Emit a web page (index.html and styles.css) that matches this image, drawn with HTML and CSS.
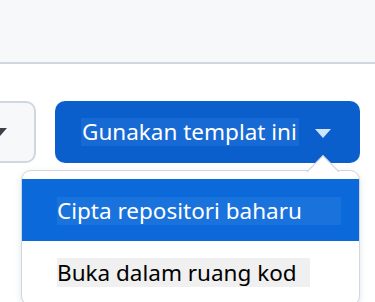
FILE: index.html
```html
<!DOCTYPE html>
<html lang="ms">
<head>
  <meta charset="UTF-8" />
  <meta name="viewport" content="width=device-width, initial-scale=1.0"/>
  <title>Templat</title>
  <link rel="stylesheet" href="styles.css">
</head>
<body>

  <div class="topbar"></div>

  <div class="actions">
    <button class="btn-secondary">
      <span class="caret caret-dark"></span>
    </button>
    <button class="btn-primary">
      <span class="label">Gunakan templat ini</span>
      <span class="caret caret-light"></span>
    </button>
  </div>

  <div class="menu">
    <svg class="menu-arrow" width="34" height="18" viewBox="0 0 34 18">
      <path d="M1 18 L17 1.5 L33 18" fill="#fff" stroke="#d0d7de" stroke-width="1.2"/>
    </svg>
    <div class="menu-item selected"><span class="label">Cipta repositori baharu</span></div>
    <div class="menu-item"><span class="label">Buka dalam ruang kod</span></div>
  </div>

</body>
</html>
```

FILE: styles.css
```css
body {
  margin: 0;
  background: #fff;
  font-family: "Noto Sans", "Open Sans", sans-serif;
  overflow: hidden;
}

.topbar {
  height: 62px;
  background: #f6f8fa;
  border-bottom: 2px solid #d0d7de;
}

.actions {
  display: flex;
  gap: 19px;
  margin-top: 37px;
}

button {
  font-family: inherit;
  cursor: pointer;
}

.btn-secondary {
  width: 90px;
  height: 62px;
  margin-left: -54px;
  background: #f6f8fa;
  border: 2px solid #d0d7de;
  border-radius: 10px;
  display: flex;
  align-items: center;
  justify-content: flex-end;
  padding: 0 27px 0 0;
}

.btn-primary {
  width: 305px;
  height: 62px;
  background: #0a5fcd;
  border: none;
  border-radius: 10px;
  color: #fff;
  font-size: 22.5px;
  display: flex;
  align-items: center;
  padding: 0 0 0 26px;
  white-space: nowrap;
}

.btn-primary .label {
  background: #1769d3;
  line-height: 28px;
  padding: 0 2px 0 1px;
}

.caret {
  width: 0;
  height: 0;
  border-left: 8px solid transparent;
  border-right: 8px solid transparent;
  border-top: 9px solid #333;
}

.caret-dark {
  border-top-color: #3d4248;
}

.caret-light {
  border-top-color: #cfe3fb;
  margin-left: 16px;
  margin-top: 2px;
}

.menu {
  position: relative;
  width: 337px;
  margin: 7px 0 0 21px;
  padding: 8px 0 16px;
  background: #fff;
  border: 1px solid #d0d7de;
  border-radius: 10px;
  box-shadow: 0 2px 6px rgba(140, 149, 159, 0.25);
  font-size: 22.5px;
}

.menu-arrow {
  position: absolute;
  top: -17px;
  left: 284px;
}

.menu-item {
  padding: 17px 0 0 35px;
  color: #000;
  white-space: nowrap;
}

.menu-item .label {
  background: #f0f0f0;
  line-height: 29px;
  display: inline-block;
  vertical-align: top;
  padding-right: 13px;
}

.menu-item.selected {
  padding: 18px 0 13px 35px;
  background: #0b69da;
  color: #fff;
}

.menu-item.selected .label {
  background: #1a72dc;
  line-height: 28px;
  padding-right: 39px;
}
```
